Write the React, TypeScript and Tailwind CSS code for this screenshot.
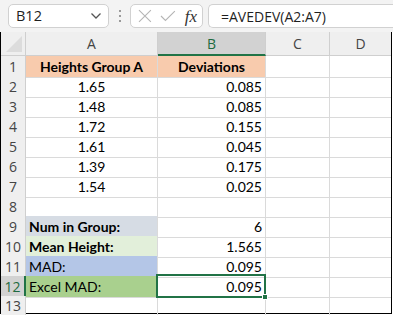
import React from "react";

const cellFont = { fontFamily: "Lato, 'Liberation Sans', sans-serif" };

type Row = {
  n: number;
  a?: string;
  b?: string;
  aBold?: boolean;
  aAlign?: "center" | "left";
  aBg?: string;
  bBg?: string;
};

const rows: Row[] = [
  { n: 1, a: "Heights Group A", b: "Deviations", aBold: true, aAlign: "center", aBg: "bg-[#f8cbad]", bBg: "bg-[#f8cbad]" },
  { n: 2, a: "1.65", b: "0.085", aAlign: "center" },
  { n: 3, a: "1.48", b: "0.085", aAlign: "center" },
  { n: 4, a: "1.72", b: "0.155", aAlign: "center" },
  { n: 5, a: "1.61", b: "0.045", aAlign: "center" },
  { n: 6, a: "1.39", b: "0.175", aAlign: "center" },
  { n: 7, a: "1.54", b: "0.025", aAlign: "center" },
  { n: 8 },
  { n: 9, a: "Num in Group:", b: "6", aBold: true, aBg: "bg-[#d6dce4]" },
  { n: 10, a: "Mean Height:", b: "1.565", aBold: true, aBg: "bg-[#e2efda]" },
  { n: 11, a: "MAD:", b: "0.095", aBg: "bg-[#b4c6e7]" },
  { n: 12, a: "Excel MAD:", b: "0.095", aBg: "bg-[#a9d08e]" },
];

function FormulaBar() {
  return (
    <div className="h-[32px] bg-[#f3f3f3] flex items-start pt-[4px] pl-[8px] gap-0">
      {/* Name box */}
      <div className="w-[101px] h-[24px] bg-white border border-[#d1d1d1] rounded-[5px] flex items-center pl-[7px] pr-[6px] justify-between">
        <span className="text-[14.5px] text-[#1f1f1f]" style={{ fontFamily: "'Open Sans', sans-serif" }}>B12</span>
        <svg width="12" height="8" viewBox="0 0 12 8">
          <path d="M1.5 1.5 L6 6 L10.5 1.5" fill="none" stroke="#555" strokeWidth="1.3" />
        </svg>
      </div>
      {/* dots */}
      <div className="w-[21px] h-[24px] flex flex-col items-center justify-center gap-[3px]">
        <span className="w-[2px] h-[2px] bg-[#9a9a9a]" />
        <span className="w-[2px] h-[2px] bg-[#9a9a9a]" />
        <span className="w-[2px] h-[2px] bg-[#9a9a9a]" />
      </div>
      {/* cancel / enter / fx */}
      <div className="w-[73px] h-[24px] bg-white border border-[#d1d1d1] rounded-[5px] flex items-center pl-[7px] pr-[5px] gap-[8px]">
        <svg width="14" height="14" viewBox="0 0 14 14">
          <path d="M1 1 L13 13 M13 1 L1 13" stroke="#b5b5b5" strokeWidth="1.1" />
        </svg>
        <svg width="16" height="12" viewBox="0 0 16 12">
          <path d="M1 6 L5.5 10.5 L15 1" fill="none" stroke="#b5b5b5" strokeWidth="1.1" />
        </svg>
        <span
          className="text-[17px] italic text-[#333] leading-none ml-[1px]"
          style={{ fontFamily: "'Liberation Serif', serif" }}
        >
          fx
        </span>
      </div>
      {/* formula */}
      <div className="ml-[5px] flex-1 h-[24px] bg-white border border-r-0 border-[#d1d1d1] rounded-l-[5px] flex items-center pl-[12px]">
        <span className="text-[14px] text-[#1f1f1f]" style={{ fontFamily: "'Open Sans', sans-serif" }}>
          =AVEDEV(A2:A7)
        </span>
      </div>
    </div>
  );
}

const headFont = { fontFamily: "'Open Sans', sans-serif" };

function Grid() {
  const cols = "grid grid-cols-[25px_132px_108px_64px_61px]";
  return (
    <div className="w-[392px] border-l border-r border-b border-black bg-white">
      {/* column headers */}
      <div className={`${cols} h-[24px] text-[14px] text-[#444]`} style={headFont}>
        <div className="bg-[#efefef] border-r border-b border-[#cfcfcf] relative">
          <svg className="absolute right-[3px] bottom-[3px]" width="16" height="16" viewBox="0 0 16 16">
            <path d="M16 0 L16 16 L0 16 Z" fill="#dcdcdc" />
          </svg>
        </div>
        <div className="bg-[#efefef] border-r border-b border-[#cfcfcf] flex items-center justify-center">A</div>
        <div className="bg-[#d2d2d2] border-r border-[#cfcfcf] border-b-2 border-b-[#217346] flex items-center justify-center text-[#1e6b40]">B</div>
        <div className="bg-[#efefef] border-r border-b border-[#cfcfcf] flex items-center justify-center">C</div>
        <div className="bg-[#efefef] border-b border-[#cfcfcf] flex items-center justify-center">D</div>
      </div>

      {rows.map((r) => {
        const sel = r.n === 12;
        return (
          <div key={r.n} className={`${cols} h-[20px] text-[14px] text-black`} style={cellFont}>
            <div
              className={`flex items-center justify-center border-b border-[#cfcfcf] text-[14px] ${
                sel ? "bg-[#d2d2d2] border-r-2 border-r-[#217346] text-[#1e6b40]" : "bg-[#efefef] border-r text-[#444]"
              }`}
              style={headFont}
            >
              {r.n}
            </div>
            <div
              className={`border-r border-b border-[#dadada] flex items-center px-[3px] ${r.aBg ?? ""} ${
                r.aAlign === "center" ? "justify-center" : "justify-start"
              } ${r.aBold ? "font-bold" : ""}`}
            >
              {r.a}
            </div>
            <div
              className={`relative border-r border-b border-[#dadada] flex items-center px-[3px] ${r.bBg ?? ""} ${
                r.n === 1 ? "justify-center font-bold" : "justify-end"
              }`}
            >
              {r.b}
              {sel && (
                <div className="absolute left-[-2px] top-[-2px] right-[-1px] bottom-[-1px] border-2 border-[#217346]">
                  <span className="absolute right-[-4px] bottom-[-4px] w-[6px] h-[6px] bg-[#217346] border border-white" />
                </div>
              )}
            </div>
            <div className="border-r border-b border-[#dadada]" />
            <div className="border-b border-[#dadada]" />
          </div>
        );
      })}

      {/* row 13 */}
      <div className={`${cols} h-[17px]`}>
        <div className="bg-[#efefef] border-r border-[#cfcfcf] flex items-start justify-center text-[14px] text-[#444] leading-[20px]" style={headFont}>
          13
        </div>
        <div className="border-r border-[#dadada]" />
        <div className="border-r border-[#dadada]" />
        <div className="border-r border-[#dadada]" />
        <div />
      </div>
    </div>
  );
}

export default function App() {
  return (
    <div className="w-[393px] h-[315px] bg-white overflow-hidden">
      <FormulaBar />
      <Grid />
    </div>
  );
}
